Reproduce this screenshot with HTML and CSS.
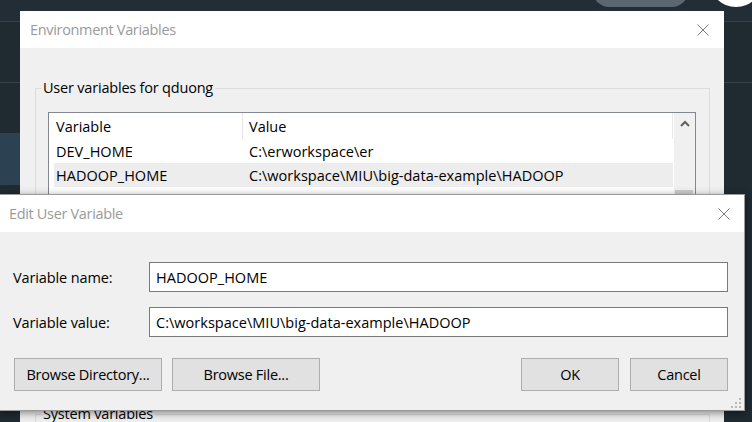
FILE: index.html
```html
<!DOCTYPE html>
<html>
<head>
<meta charset="utf-8">
<title>Environment Variables</title>
<link rel="stylesheet" href="styles.css">
</head>
<body>
<div class="desktop">
  <div class="topbar"></div>
  <div class="hline"></div>
  <div class="side-band"></div>
  <div class="pill"></div>
  <div class="avatar"></div>

  <section class="window env">
    <header class="titlebar env-titlebar">
      <span class="title">Environment Variables</span>
      <svg class="close" width="12" height="12" viewBox="0 0 12 12"><path d="M0.5 0.5 L11.5 11.5 M11.5 0.5 L0.5 11.5" stroke="#7a7a7a" stroke-width="1" fill="none"/></svg>
    </header>
    <div class="env-body">
      <fieldset class="group user-group">
        <legend>User variables for qduong</legend>
        <div class="listview">
          <div class="list-content">
            <div class="list-header">
              <div class="hcell hcell-var">Variable</div>
              <div class="hcell hcell-val">Value</div>
            </div>
            <div class="row">
              <div class="cell cell-var val">DEV_HOME</div>
              <div class="cell cell-val val">C:\erworkspace\er</div>
            </div>
            <div class="row selected">
              <div class="cell cell-var val">HADOOP_HOME</div>
              <div class="cell cell-val val">C:\workspace\MIU\big-data-example\HADOOP</div>
            </div>
            <div class="row">
              <div class="cell cell-var val">JAVA_HOME</div>
              <div class="cell cell-val val">C:\Program Files\Java\jdk1.8.0_261</div>
            </div>
          </div>
          <div class="scrollbar">
            <div class="scroll-btn">
              <svg width="10" height="7" viewBox="0 0 10 7"><path d="M1 6 L5 2 L9 6" stroke="#606060" stroke-width="2" fill="none"/></svg>
            </div>
            <div class="scroll-track"><div class="thumb"></div></div>
          </div>
        </div>
        <div class="group-buttons">
          <button class="btn">New...</button>
          <button class="btn">Edit...</button>
          <button class="btn">Delete</button>
        </div>
      </fieldset>
      <fieldset class="group sys-group">
        <legend>System variables</legend>
      </fieldset>
    </div>
  </section>

  <section class="window edit">
    <header class="titlebar edit-titlebar">
      <span class="title">Edit User Variable</span>
      <svg class="close" width="12" height="12" viewBox="0 0 12 12"><path d="M0.5 0.5 L11.5 11.5 M11.5 0.5 L0.5 11.5" stroke="#7a7a7a" stroke-width="1" fill="none"/></svg>
    </header>
    <div class="edit-body">
      <div class="form">
        <label class="lbl">Variable name:</label>
        <div class="input val">HADOOP_HOME</div>
        <label class="lbl">Variable value:</label>
        <div class="input val">C:\workspace\MIU\big-data-example\HADOOP</div>
      </div>
      <div class="actions">
        <div class="left-actions">
          <button class="btn btn-wide">Browse Directory...</button>
          <button class="btn btn-wide">Browse File...</button>
        </div>
        <div class="right-actions">
          <button class="btn btn-std">OK</button>
          <button class="btn btn-std">Cancel</button>
        </div>
      </div>
    </div>
    <svg class="grip" width="12" height="12" viewBox="0 0 12 12" fill="#b8b8b8">
      <rect x="9" y="1" width="2" height="2"/>
      <rect x="5" y="5" width="2" height="2"/><rect x="9" y="5" width="2" height="2"/>
      <rect x="1" y="9" width="2" height="2"/><rect x="5" y="9" width="2" height="2"/><rect x="9" y="9" width="2" height="2"/>
    </svg>
  </section>
</div>
</body>
</html>
```

FILE: styles.css
```css
* { box-sizing: border-box; }

html, body {
  margin: 0;
  padding: 0;
}

body {
  width: 752px;
  height: 422px;
  overflow: hidden;
  background: #1f2a31;
  font-family: "Open Sans", "Noto Sans", sans-serif;
  font-size: 14.5px;
  letter-spacing: -0.12px;
  color: #000;
}

.desktop {
  position: relative;
  width: 752px;
  height: 422px;
  overflow: hidden;
}

/* background desktop app */
.topbar {
  height: 22px;
  background: #222d35;
  border-bottom: 1px solid #37434c;
}

.hline {
  margin-top: 60px;
  height: 1px;
  background: #36424b;
}

.side-band {
  margin-top: 50px;
  width: 20px;
  height: 52px;
  background: #2c4252;
}

.pill {
  position: absolute;
  left: 593px;
  top: -25px;
  width: 95px;
  height: 32px;
  border-radius: 16px;
  background: #5a6770;
}

.avatar {
  position: absolute;
  left: 709px;
  top: -47px;
  width: 54px;
  height: 54px;
  border-radius: 50%;
  background: #fff;
}

/* windows */
.window {
  position: absolute;
  background: #f0f0f0;
}

.titlebar {
  display: flex;
  align-items: center;
  justify-content: space-between;
  background: #fff;
  color: #9a9a9a;
  font-size: 14.5px;
  letter-spacing: -0.33px;
}

.val {
  letter-spacing: 0.02px;
}

.env {
  left: 20px;
  top: 11px;
  width: 704px;
  height: 420px;
}

.env-titlebar {
  height: 37px;
  padding: 0 15px 0 10px;
}

.env-body {
  padding: 30px 14px 0 15px;
}

.group {
  margin: 0;
  border: 1px solid #dcdcdc;
  padding: 14px 13px 14px 12px;
  min-width: 0;
}

.group legend {
  padding: 0 2px;
  margin-left: -7px;
  line-height: 20px;
  letter-spacing: -0.2px;
  color: #000;
}

.listview {
  display: flex;
  width: 648px;
  height: 210px;
  background: #fff;
  border: 1px solid #828790;
}

.list-content {
  flex: 1;
  overflow: hidden;
}

.list-header {
  display: flex;
  height: 26px;
  align-items: center;
  border-right: 1px solid #e8e8e8;
  letter-spacing: 0;
}

.hcell {
  height: 100%;
  display: flex;
  align-items: center;
  white-space: nowrap;
}

.hcell-var {
  width: 194px;
  padding-left: 7px;
  border-right: 1px solid #e5e5e5;
}

.hcell-val {
  padding-left: 6px;
}

.row {
  display: flex;
  align-items: center;
  height: 24px;
  margin-left: 5px;
  white-space: nowrap;
}

.row.selected {
  background: #ededed;
}

.cell-var {
  width: 188px;
  padding-left: 2px;
}

.cell-val {
  padding-left: 7px;
}

.scrollbar {
  width: 21px;
  margin-left: 1px;
  display: flex;
  flex-direction: column;
  background: #f0f0f0;
}

.scroll-btn {
  height: 21px;
  display: flex;
  align-items: center;
  justify-content: center;
}

.scroll-track {
  flex: 1;
  padding: 56px 2px 0 1px;
}

.thumb {
  height: 40px;
  background: #cdcdcd;
}

.group-buttons {
  display: flex;
  justify-content: flex-end;
  gap: 10px;
  margin-top: 10px;
}

.sys-group {
  margin-top: 24px;
  height: 60px;
}

/* buttons */
.btn {
  font-family: inherit;
  font-size: 14.5px;
  letter-spacing: -0.25px;
  color: #000;
  background: #e1e1e1;
  border: 1px solid #adadad;
  height: 33px;
  padding: 0;
  margin: 0;
  width: 98px;
}

.btn-wide {
  width: 148px;
}

.btn-std {
  width: 98px;
}

/* edit dialog */
.edit {
  left: -1px;
  top: 194px;
  width: 746px;
  height: 217px;
  border: 1px solid #9a9a9a;
  border-left: none;
  box-shadow: 0 2px 8px rgba(0, 0, 0, 0.45);
}

.edit-titlebar {
  height: 37px;
  padding: 0 14px 0 10px;
}

.edit-body {
  padding: 30px 16px 0 14px;
}

.form {
  display: grid;
  grid-template-columns: 136px 579px;
  row-gap: 15px;
  align-items: center;
}

.input {
  height: 30px;
  border: 1px solid #7a7a7a;
  background: #fff;
  padding-left: 6px;
  display: flex;
  align-items: center;
  white-space: nowrap;
}

.actions {
  display: flex;
  justify-content: space-between;
  margin-top: 21px;
  padding-left: 1px;
}

.left-actions {
  display: flex;
  gap: 10px;
}

.right-actions {
  display: flex;
  gap: 11px;
}

.grip {
  position: absolute;
  right: 2px;
  bottom: 1px;
}
```
